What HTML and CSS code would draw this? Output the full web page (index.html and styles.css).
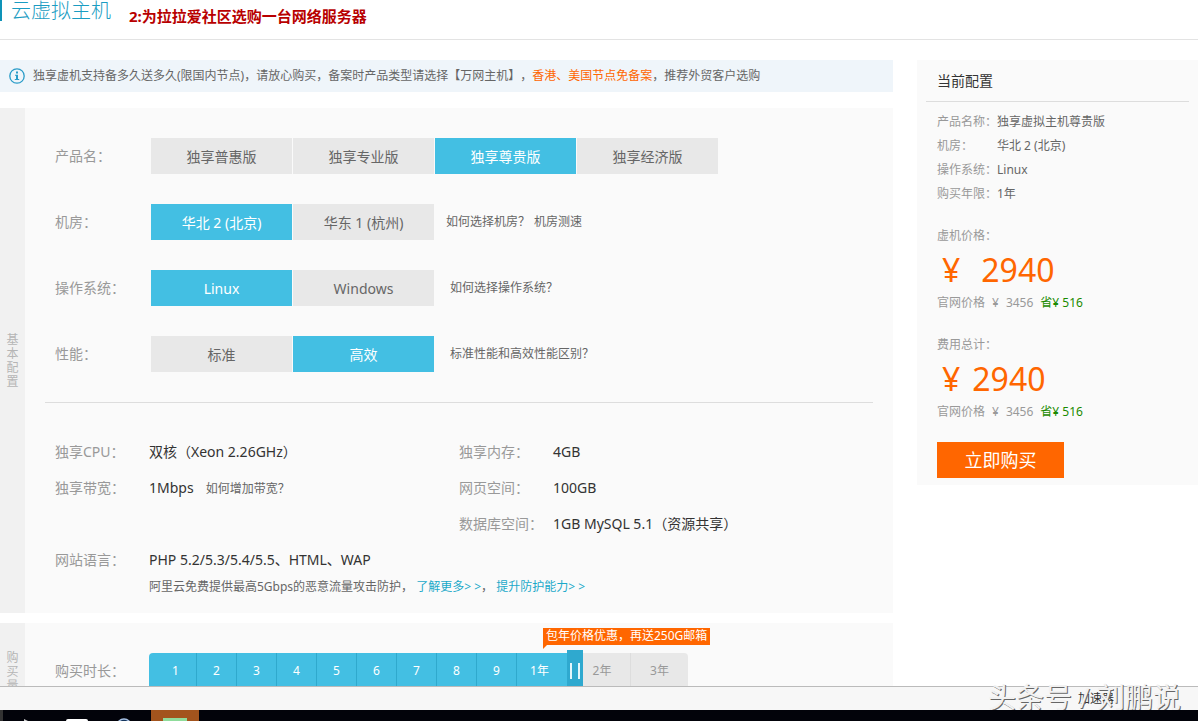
FILE: index.html
```html
<!DOCTYPE html>
<html lang="zh-CN">
<head>
<meta charset="utf-8">
<title>云虚拟主机</title>
<link rel="stylesheet" href="styles.css">
</head>
<body>
<div class="viewport">
  <header class="header">
    <h1 class="title">云虚拟主机</h1>
    <p class="step">2:为拉拉爱社区选购一台网络服务器</p>
  </header>
  <div class="content">
    <main class="main">
      <div class="notice">
        <svg class="info" viewBox="0 0 16 16" width="16" height="16" aria-hidden="true">
          <circle cx="8" cy="8" r="7.2" fill="none" stroke="#2a9cc8" stroke-width="1.3"/>
          <path d="M7 3.6h2v1.8H7zM6 6.7h3v4.4h1.2v1H5.8v-1H7V7.700H6z" fill="#2a9cc8"/>
        </svg>
        <p>独享虚机支持备多久送多久(限国内节点)，请放心购买，备案时产品类型请选择【万网主机】，<span class="hot">香港、美国节点免备案</span>，推荐外贸客户选购</p>
      </div>

      <section class="panel">
        <h2 class="side"><span>基本配置</span></h2>
        <div class="body">
          <div class="options">
            <div class="row">
              <span class="label">产品名：</span>
              <div class="group"><button class="opt">独享普惠版</button><button class="opt">独享专业版</button><button class="opt on">独享尊贵版</button><button class="opt">独享经济版</button></div>
            </div>
            <div class="row">
              <span class="label">机房：</span>
              <div class="group"><button class="opt on">华北 2 (北京)</button><button class="opt">华东 1 (杭州)</button></div>
              <div class="help"><a href="#">如何选择机房？</a><a href="#">机房测速</a></div>
            </div>
            <div class="row">
              <span class="label">操作系统：</span>
              <div class="group"><button class="opt on">Linux</button><button class="opt">Windows</button></div>
              <div class="help wide"><a href="#">如何选择操作系统？</a></div>
            </div>
            <div class="row">
              <span class="label">性能：</span>
              <div class="group"><button class="opt">标准</button><button class="opt on">高效</button></div>
              <div class="help wide"><a href="#">标准性能和高效性能区别？</a></div>
            </div>
          </div>
          <div class="specs">
            <span class="label">独享CPU：</span><span>双核（Xeon 2.26GHz）</span>
            <span class="label">独享内存：</span><span>4GB</span>
            <span class="label">独享带宽：</span><span>1Mbps<a class="more" href="#">如何增加带宽？</a></span>
            <span class="label">网页空间：</span><span>100GB</span>
            <span class="label second">数据库空间：</span><span>1GB MySQL 5.1（资源共享）</span>
            <span class="label">网站语言：</span><span class="span">PHP 5.2/5.3/5.4/5.5、HTML、WAP</span>
            <p class="guard">阿里云免费提供最高5Gbps的恶意流量攻击防护， <a href="#">了解更多&gt; &gt;</a>， <a href="#">提升防护能力&gt; &gt;</a></p>
          </div>
        </div>
      </section>

      <section class="panel">
        <h2 class="side amount"><span>购买量</span></h2>
        <div class="body">
          <div class="row duration">
            <span class="label">购买时长：</span>
            <div class="slider">
              <button class="seg first">1</button><button class="seg">2</button><button class="seg">3</button><button class="seg">4</button><button class="seg">5</button><button class="seg">6</button><button class="seg">7</button><button class="seg">8</button><button class="seg">9</button><button class="seg year">1年</button><button class="seg off">2年</button><button class="seg off last">3年</button>
              <button class="handle" aria-label="拖动选择时长"></button>
              <span class="tip">包年价格优惠，再送250G邮箱</span>
            </div>
          </div>
        </div>
      </section>
    </main>

    <aside class="summary">
      <h2 class="current">当前配置</h2>
      <dl class="config">
        <dt>产品名称：</dt><dd>独享虚拟主机尊贵版</dd>
        <dt>机房：</dt><dd>华北 2 (北京)</dd>
        <dt>操作系统：</dt><dd>Linux</dd>
        <dt>购买年限：</dt><dd>1年</dd>
      </dl>
      <div class="cost">
        <p>虚机价格：</p>
        <p class="price spaced"><span>¥</span><span>2940</span></p>
        <p class="official"><span>官网价格</span><span>¥</span><span>3456</span><span class="save">省¥ 516</span></p>
      </div>
      <div class="cost">
        <p>费用总计：</p>
        <p class="price"><span>¥</span><span>2940</span></p>
        <p class="official"><span>官网价格</span><span>¥</span><span>3456</span><span class="save">省¥ 516</span></p>
      </div>
      <button class="buy">立即购买</button>
    </aside>
  </div>

  <footer class="status">
    <span class="boost">加速器</span>
    <span class="watermark">头条号 / 刘鹏说</span>
  </footer>
  <div class="taskbar">
    <svg viewBox="0 0 200 11" width="200" height="11" aria-hidden="true">
      <rect width="3" height="11" fill="#333"/>
      <path d="M24 9l4 2h-4z" fill="#ccc"/>
      <rect x="66" y="9" width="22" height="6" rx="2" fill="#fff"/>
      <circle cx="124" cy="16" r="7" fill="#16365e" stroke="#a9c3e6" stroke-width="1.500"/>
      <rect x="151" width="48" height="11" fill="#a3541d"/>
      <rect x="163" y="8" width="24" height="3" fill="#8fdc9b"/>
    </svg>
  </div>
</div>
</body>
</html>
```
FILE: styles.css
```css
* { box-sizing: border-box; }
body, h1, h2, p, dl, dd { margin: 0; font-weight: normal; }
body {
  font: 12px/24px "Noto Sans", "Noto Sans CJK SC", sans-serif;
  text-spacing-trim: space-all;
  color: #666;
  background: #fff;
}
button { font: inherit; border: 0; padding: 0; cursor: pointer; }
a { color: inherit; text-decoration: none; }

.viewport { display: flex; flex-direction: column; height: 100vh; overflow: hidden; }

.header {
  flex: none;
  display: flex;
  gap: 18px;
  height: 40px;
  border-bottom: 1px solid #e3e3e3;
}
.title {
  height: 21px;
  padding-left: 9px;
  border-left: 2px solid #0e93b8;
  color: #1a9cc2;
  font-size: 20px;
  line-height: 22px;
  font-weight: 300;
}
.step { color: #b80000; font-size: 15px; font-weight: bold; line-height: 32px; }

.content {
  flex: 1;
  min-height: 0;
  overflow: hidden;
  display: flex;
  align-items: flex-start;
  gap: 24px;
  padding-top: 20px;
}
.main { flex: 1; min-width: 0; }

.notice {
  display: flex;
  align-items: center;
  gap: 8px;
  height: 32px;
  padding-left: 9px;
  margin-bottom: 16px;
  background: #eff5fa;
  white-space: nowrap;
}
.info { flex: none; }
.hot { color: #f60; }

.panel { display: flex; margin-bottom: 10px; background: #fafafa; }
.side {
  flex: none;
  width: 25px;
  display: flex;
  align-items: center;
  justify-content: center;
  background: #f1f1f1;
  color: #b5b5b5;
  font-size: 12px;
  line-height: 14px;
}
.side span { width: 12px; word-break: break-all; }
.body { flex: 1; min-width: 0; padding: 0 20px; }

.options {
  display: flex;
  flex-direction: column;
  gap: 30px;
  padding: 30px 0;
  border-bottom: 1px solid #ddd;
}
.row { display: flex; align-items: center; padding-left: 10px; white-space: nowrap; }
.label { color: #999; font-size: 14px; }
.row .label { flex: none; width: 96px; }
.group { display: flex; gap: 1px; }
.opt { width: 141px; height: 36px; padding-top: 1px; background: #e8e8e8; color: #666; font-size: 14px; }
.opt.on { background: #43bfe3; color: #fff; }
.help { display: flex; gap: 4px; padding-left: 12px; }
.help.wide { padding-left: 16px; }

.specs {
  display: grid;
  grid-template-columns: 94px 310px 94px 1fr;
  grid-template-rows: repeat(4, 36px) auto;
  padding: 31px 0 18px 10px;
  color: #333;
  font-size: 14px;
  line-height: 36px;
  white-space: nowrap;
}
.specs .second { grid-column: 3; }
.specs .span { grid-column: 2 / -1; }
.more { margin-left: 12px; color: #666; font-size: 12px; }
.guard { grid-column: 2 / -1; color: #666; font-size: 12px; line-height: 17px; }
.guard a { color: #1aa9c9; }

.amount { align-items: flex-start; padding-top: 28px; }
.duration { padding-top: 30px; padding-bottom: 30px; }
.row.duration .label { width: 94px; }
.slider { position: relative; display: flex; height: 36px; }
.seg {
  width: 40px;
  border-right: 1px solid #2fa9cd;
  background: #43bfe3;
  color: #fff;
}
.first { width: 48px; padding-left: 6px; border-radius: 4px 0 0 4px; }
.year { width: 57px; padding-right: 12px; border-right: 0; }
.off { width: 57px; background: #e8e8e8; color: #999; border-right-color: #ddd; }
.last { border-right: 0; border-radius: 0 4px 4px 0; }
.handle {
  position: absolute;
  top: -3px;
  left: 418px;
  width: 16px;
  height: 42px;
  background: #2fa9cf;
}
.handle::before {
  content: "";
  display: block;
  width: 6px;
  height: 16px;
  margin: 0 auto;
  border: solid #e4f6fb;
  border-width: 0 2px;
}
.tip {
  position: absolute;
  top: -25px;
  left: 394px;
  height: 17px;
  padding: 0 3px;
  background: #f60;
  color: #fff;
  line-height: 16px;
}
.tip::after {
  content: "";
  position: absolute;
  top: 17px;
  left: 0;
  border-top: 4px solid #f60;
  border-right: 4px solid transparent;
}

.summary { flex: none; width: 281px; padding: 0 9px 7px; background: #fafafa; color: #999; }
.current {
  padding: 9px 11px 8px;
  border-bottom: 1px solid #ddd;
  color: #333;
  font-size: 14px;
}
.config {
  display: grid;
  grid-template-columns: 60px 1fr;
  padding: 8px 11px 0;
  margin-bottom: 18px;
}
.config dt { white-space: nowrap; }
.config dd { color: #666; }
.cost { padding-left: 11px; margin-bottom: 19px; }
.price {
  display: flex;
  gap: 12px;
  padding-left: 5px;
  color: #f60;
  font-size: 32px;
  line-height: 44px;
}
.price.spaced { gap: 21px; }
.official { display: flex; gap: 7px; line-height: 22px; }
.save { color: #1a8a00; }
.buy {
  display: block;
  width: 127px;
  height: 36px;
  margin-left: 11px;
  background: #f60;
  color: #fff;
  font-size: 18px;
}

.status {
  flex: none;
  position: relative;
  height: 24px;
  border-top: 1px solid #bbb;
  background: #f7f7f7;
  color: #333;
  display: flex;
  justify-content: flex-end;
  padding-right: 84px;
}
.watermark {
  position: absolute;
  right: 17px;
  top: -5px;
  color: #f2f2f2;
  font-size: 28px;
  line-height: 30px;
  text-shadow: 1px 1px 0 #666;
  white-space: nowrap;
}
.taskbar { flex: none; position: relative; height: 11px; background: #02030a; }
.taskbar svg { display: block; }
```
